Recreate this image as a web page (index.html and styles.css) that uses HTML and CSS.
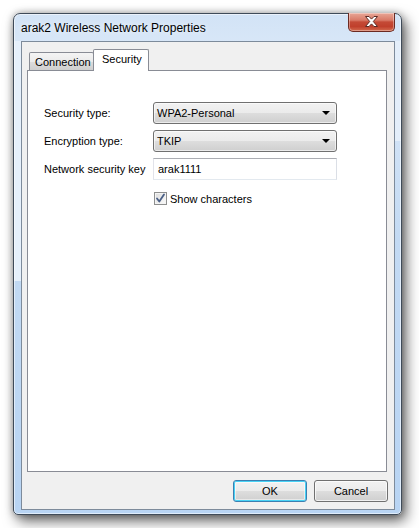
FILE: index.html
```html
<!DOCTYPE html>
<html>
<head>
<meta charset="utf-8">
<link rel="stylesheet" href="styles.css">
</head>
<body>
<div class="window">
  <div class="titlebar">
    <span class="title">arak2 Wireless Network Properties</span>
    <div class="close">
      <svg width="15" height="11" viewBox="0 0 15 11"><path d="M1.5 0.5h3.5l2.5 2.6 2.5-2.6h3.5l-4.2 5 4.2 5h-3.5l-2.5-2.6-2.5 2.6h-3.5l4.2-5z" fill="#fff" stroke="#5a2a24" stroke-width="1" stroke-linejoin="round"/></svg>
    </div>
  </div>
  <div class="client">
    <div class="tabs">
      <div class="tab">Connection</div>
      <div class="tab active">Security</div>
    </div>
    <div class="panel">
      <div class="form">
        <label class="lbl r1">Security type:</label>
        <div class="combo r1"><span>WPA2-Personal</span><i class="arrow"></i></div>
        <label class="lbl r2">Encryption type:</label>
        <div class="combo r2"><span>TKIP</span><i class="arrow"></i></div>
        <label class="lbl r3">Network security key</label>
        <div class="input r3">arak1111</div>
        <div class="check r4">
          <span class="box"><svg width="11" height="11" viewBox="0 0 11 11"><path d="M2 5.5 L4.3 8.5 L9 1.5" fill="none" stroke="#4a5f86" stroke-width="1.8" stroke-linecap="round" stroke-linejoin="round"/></svg></span>
          <span>Show characters</span>
        </div>
      </div>
    </div>
    <div class="buttons">
      <div class="btn default">OK</div>
      <div class="btn">Cancel</div>
    </div>
  </div>
</div>
</body>
</html>
```
FILE: styles.css
```css
html, body {
  margin: 0;
  background: #ffffff;
}
body {
  padding: 13px;
  font-family: "Liberation Sans", Arial, sans-serif;
  font-size: 11px;
  color: #000;
}
.window {
  position: relative;
  width: 389px;
  height: 502px;
  box-sizing: border-box;
  border: 1px solid #3f4b59;
  border-radius: 7px 7px 5px 5px;
  padding: 0 6px 4px 7px;
  display: flex;
  flex-direction: column;
  background:
    linear-gradient(#e6f0fb, #e6f0fb) left 0 top 27px / 7px 240px no-repeat,
    linear-gradient(#e3eefa, #e3eefa) right 0 top 27px / 6px 100px no-repeat,
    linear-gradient(to bottom, #d2e3f6 0%, #dae8f8 8%, #c3daf3 45%, #b8d4f3 100%);
  box-shadow: inset 0 0 0 1px rgba(255,255,255,0.55), 4px 6px 14px rgba(0,0,0,0.6), 0 0 7px rgba(0,0,0,0.3);
}
.titlebar {
  height: 27px;
  display: flex;
  align-items: center;
}
.title {
  font-size: 12px;
  color: #000;
  text-shadow: 0 0 6px rgba(255,255,255,0.9);
  padding-top: 1px;
}
.close {
  position: absolute;
  top: -1px;
  right: 6px;
  width: 47px;
  height: 19px;
  box-sizing: border-box;
  border: 1px solid #6b2a22;
  border-top: none;
  border-radius: 0 0 5px 5px;
  background: linear-gradient(to bottom, #e8a797 0%, #d97a67 40%, #c44a36 50%, #c0402c 75%, #d36b4f 100%);
  box-shadow: inset 0 0 0 1px rgba(255,255,255,0.35);
  display: flex;
  align-items: center;
  justify-content: center;
}
.close svg { margin-top: -1px; }
.client {
  flex: 1;
  border: 1px solid #7d8b9b;
  background: #f0f0f0;
  display: flex;
  flex-direction: column;
  padding: 7px 0 7px 0;
}
.tabs {
  display: flex;
  align-items: flex-end;
  height: 21px;
  padding-left: 7px;
}
.tab {
  box-sizing: border-box;
  height: 18px;
  width: 65px;
  border: 1px solid #898c95;
  border-bottom: none;
  border-radius: 2px 2px 0 0;
  background: linear-gradient(to bottom, #f4f4f4 0%, #ebebeb 50%, #dddddd 51%, #cfcfcf 100%);
  padding: 2px 0 0 5px;
  line-height: 14px;
}
.tab.active {
  position: relative;
  z-index: 1;
  width: 56px;
  height: 22px;
  margin-bottom: -1px;
  margin-left: -1px;
  background: #ffffff;
  padding: 2px 0 0 8px;
}
.panel {
  flex: 1;
  margin: 0 7px 0 5px;
  border: 1px solid #898c95;
  background: #ffffff;
  padding: 31px 0 0 16px;
}
.form {
  display: grid;
  grid-template-columns: 109px 184px;
  grid-template-rows: 22px 22px 22px 22px;
  row-gap: 6px;
  align-items: center;
}
.form .r3 { margin-top: -1px; }
.lbl { line-height: 14px; }
.combo {
  box-sizing: border-box;
  height: 22px;
  border: 1px solid #707070;
  border-radius: 3px;
  background: linear-gradient(to bottom, #f2f2f2 0%, #ebebeb 50%, #dddddd 51%, #cfcfcf 100%);
  box-shadow: inset 0 0 0 1px rgba(255,255,255,0.6);
  display: flex;
  align-items: center;
  justify-content: space-between;
  padding: 0 6px 0 3px;
}
.arrow {
  width: 0;
  height: 0;
  border-left: 4px solid transparent;
  border-right: 4px solid transparent;
  border-top: 4px solid #000;
}
.input {
  box-sizing: border-box;
  height: 22px;
  border: 1px solid #abadb3;
  border-top-color: #abadb3;
  border-left-color: #e2e3ea;
  border-right-color: #dbdfe6;
  border-bottom-color: #e3e9ef;
  background: #fff;
  padding: 0 4px;
  display: flex;
  align-items: center;
}
.check {
  grid-column: 2;
  display: flex;
  align-items: center;
  gap: 3px;
  margin-left: 1px;
  margin-top: 3px;
}
.box {
  box-sizing: border-box;
  width: 13px;
  height: 13px;
  border: 1px solid #8e8f8f;
  background: linear-gradient(135deg, #dcdcdc, #fbfbfb);
  box-shadow: inset 0 0 0 1px #f4f4f4;
  display: flex;
  align-items: center;
  justify-content: center;
}
.buttons {
  display: flex;
  justify-content: flex-end;
  gap: 7px;
  margin: 8px 6px 0 0;
}
.btn {
  box-sizing: border-box;
  width: 74px;
  height: 22px;
  border: 1px solid #707070;
  border-radius: 3px;
  background: linear-gradient(to bottom, #f2f2f2 0%, #ebebeb 50%, #dddddd 51%, #cfcfcf 100%);
  box-shadow: inset 0 0 0 1px rgba(255,255,255,0.7);
  display: flex;
  align-items: center;
  justify-content: center;
}
.btn.default {
  border-color: #3c7fb1;
  background: linear-gradient(to bottom, #eaf6fd 0%, #d9f0fc 50%, #bee6fd 51%, #a7d9f5 100%);
  background: linear-gradient(to bottom, #f2f2f2 0%, #ebebeb 50%, #dddddd 51%, #cfcfcf 100%);
  box-shadow: inset 0 0 0 1px #48d2f5, inset 0 0 0 2px rgba(255,255,255,0.5);
}
```
